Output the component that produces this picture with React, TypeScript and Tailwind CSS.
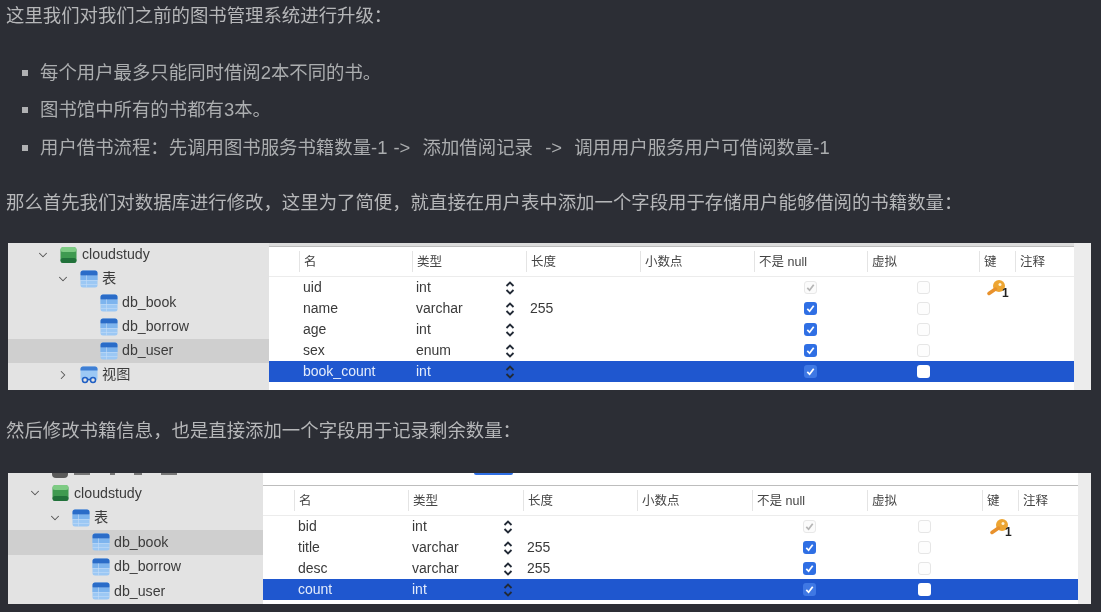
import { ChevronDown, ChevronRight } from "lucide-react";

type SideItem = { label: string; level: 0 | 1 | 2; icon: "db" | "table" | "view"; chevron?: "down" | "right"; active?: boolean };

type Field = { name: string; type: string; length?: string; selected?: boolean; primary?: boolean };

const COLUMNS = ["名", "类型", "长度", "小数点", "不是 null", "虚拟", "键", "注释"];

function DbIcon() {
  return (
    <svg viewBox="0 0 17 18" className="mr-px h-[18px] w-[17px] shrink-0">
      <rect x="0.5" y="1" width="16" height="16" rx="3.5" fill="#3f9a50" />
      <rect x="0.5" y="1" width="16" height="5" rx="2.5" fill="#7ecb84" />
      <rect x="0.5" y="12" width="16" height="5" rx="2.5" fill="#21713a" />
    </svg>
  );
}

function TableIcon() {
  return (
    <svg viewBox="0 0 18 18" className="h-[18px] w-[18px] shrink-0">
      <rect x="0.5" y="0.5" width="17" height="17" rx="2.5" fill="#9cc8f4" />
      <rect x="0.5" y="6" width="17" height="4" fill="#7db4ee" />
      <path d="M0.5 3a2.5 2.5 0 0 1 2.5-2.5h12a2.5 2.5 0 0 1 2.5 2.5v2.5h-17z" fill="#2a6cc8" />
      <rect x="0.5" y="10" width="17" height="0.6" fill="#c4dcf7" />
      <rect x="0.5" y="14" width="17" height="0.6" fill="#c4dcf7" />
      <rect x="6" y="5.5" width="0.6" height="12" fill="#c4dcf7" />
    </svg>
  );
}

function ViewIcon() {
  return (
    <svg viewBox="0 0 18 18" className="h-[18px] w-[18px] shrink-0">
      <rect x="0.5" y="0.5" width="17" height="14" rx="2.5" fill="#9cc8f4" />
      <path d="M0.5 3a2.5 2.5 0 0 1 2.5-2.5h12a2.5 2.5 0 0 1 2.5 2.5v1.5h-17z" fill="#3f7fd4" />
      <circle cx="5" cy="14" r="2.5" fill="#e3e3e3" stroke="#1f5fc4" strokeWidth="1.5" />
      <circle cx="13" cy="14" r="2.5" fill="#e3e3e3" stroke="#1f5fc4" strokeWidth="1.5" />
      <path d="M7.5 13.5h3" stroke="#1f5fc4" strokeWidth="1.5" />
    </svg>
  );
}

function KeyIcon() {
  return (
    <svg viewBox="0 0 18 16" className="h-4 w-[18px]">
      <circle cx="12" cy="6" r="6" fill="#eda532" />
      <circle cx="13" cy="4.5" r="1.5" fill="#fff4d8" />
      <path d="M8.5 9 2 13.5" stroke="#e8912c" strokeWidth="3.5" strokeLinecap="round" />
    </svg>
  );
}

function UpDown() {
  return (
    <svg viewBox="0 0 10 14" className="h-[14px] w-[10px] shrink-0" fill="none" stroke="#222a36" strokeWidth="1.8">
      <path d="M1.5 5 5 1.5 8.5 5" />
      <path d="M1.5 9 5 12.5 8.5 9" />
    </svg>
  );
}

function Checkbox({ checked, muted, selected }: { checked?: boolean; muted?: boolean; selected?: boolean }) {
  if (!checked) {
    return <span className={selected ? "h-[13px] w-[13px] rounded-[3px] bg-white" : "h-[13px] w-[13px] rounded-[3px] border border-[#e6e6e6] bg-[#fdfdfd]"} />;
  }
  const box = muted ? "border border-[#e8e8e8] bg-[#fbfbfb]" : selected ? "bg-[#3f78e4]" : "bg-[#2f6fe4]";
  return (
    <span className={`flex h-[13px] w-[13px] items-center justify-center rounded-[3px] ${box}`}>
      <svg viewBox="0 0 12 12" className="h-[11px] w-[11px]" fill="none" stroke={muted ? "#b5b5b5" : "#ffffff"} strokeWidth="1.9">
        <path d="M2.5 6.5 5 9l4.5-6" />
      </svg>
    </span>
  );
}

function Sidebar({ items, width, pads, rowHeight, children }: { items: SideItem[]; width: string; pads: string[]; rowHeight: string; children?: React.ReactNode }) {
  return (
    <div className={`h-full shrink-0 bg-[#e3e3e3] text-[14.2px] text-[#3c3c3c] ${width}`}>
      {children}
      {items.map((item) => (
        <div key={item.label} className={`flex items-center ${rowHeight} ${pads[item.level]} ${item.active ? "bg-[#cfcfcf]" : ""}`}>
          <span className="w-[14px] shrink-0 text-[#555]">
            {item.chevron === "down" && <ChevronDown size={14} strokeWidth={1.8} />}
            {item.chevron === "right" && <ChevronRight size={14} strokeWidth={1.8} />}
          </span>
          <span className="ml-[10px] mr-[4px] flex">
            {item.icon === "db" && <DbIcon />}
            {item.icon === "table" && <TableIcon />}
            {item.icon === "view" && <ViewIcon />}
          </span>
          <span>{item.label}</span>
        </div>
      ))}
    </div>
  );
}

function DesignTable({ fields, grid, typeWidth }: { fields: Field[]; grid: string; typeWidth: string }) {
  return (
    <div className="min-w-0 text-[14px] text-[#3a3a3a]">
      <div className={`grid h-[30px] items-center border-b border-[#ececec] ${grid}`}>
        <span />
        {COLUMNS.map((col) => (
          <span key={col} className="border-l border-[#e4e4e4] pl-[4px] pt-[2px] text-[12.5px] text-[#444]">
            {col}
          </span>
        ))}
      </div>
      {fields.map((f) => (
        <div key={f.name} className={`grid h-[21px] items-center ${grid} ${f.selected ? "bg-[#1f57cf] text-[#e4ecfb]" : ""}`}>
          <span />
          <span className="pl-[4px]">{f.name}</span>
          <span className="flex items-center pl-[4px]">
            <span className={typeWidth}>{f.type}</span>
            <UpDown />
          </span>
          <span className="pl-[4px]">{f.length}</span>
          <span />
          <span className="flex justify-center">
            <Checkbox checked muted={f.primary} selected={f.selected} />
          </span>
          <span className="flex justify-center">
            <Checkbox selected={f.selected} />
          </span>
          <span className="pl-[8px]">
            {f.primary && (
              <span className="relative block h-4 w-[18px]">
                <KeyIcon />
                <span className="absolute left-[15px] top-[7px] text-[12px] font-bold leading-none text-[#222]">1</span>
              </span>
            )}
          </span>
          <span />
        </div>
      ))}
    </div>
  );
}

const userSide: SideItem[] = [
  { label: "cloudstudy", level: 0, icon: "db", chevron: "down" },
  { label: "表", level: 1, icon: "table", chevron: "down" },
  { label: "db_book", level: 2, icon: "table" },
  { label: "db_borrow", level: 2, icon: "table" },
  { label: "db_user", level: 2, icon: "table", active: true },
  { label: "视图", level: 1, icon: "view", chevron: "right" },
];

const bookSide: SideItem[] = [
  { label: "cloudstudy", level: 0, icon: "db", chevron: "down" },
  { label: "表", level: 1, icon: "table", chevron: "down" },
  { label: "db_book", level: 2, icon: "table", active: true },
  { label: "db_borrow", level: 2, icon: "table" },
  { label: "db_user", level: 2, icon: "table" },
];

const userFields: Field[] = [
  { name: "uid", type: "int", primary: true },
  { name: "name", type: "varchar", length: "255" },
  { name: "age", type: "int" },
  { name: "sex", type: "enum" },
  { name: "book_count", type: "int", selected: true },
];

const bookFields: Field[] = [
  { name: "bid", type: "int", primary: true },
  { name: "title", type: "varchar", length: "255" },
  { name: "desc", type: "varchar", length: "255" },
  { name: "count", type: "int", selected: true },
];

const BULLETS = [
  "每个用户最多只能同时借阅2本不同的书。",
  "图书馆中所有的书都有3本。",
  "用户借书流程：先调用图书服务书籍数量-1 ->  添加借阅记录  ->  调用用户服务用户可借阅数量-1",
];

export default function App() {
  return (
    <main className="h-[612px] w-[1101px] overflow-hidden bg-[#2c2e35] pt-px font-['Liberation_Sans','Noto_Sans_CJK_SC',sans-serif] text-[18.4px] text-[#b6b7b9] blur-[0.35px] [text-spacing-trim:space-all]">
      <p className="h-[30px] pl-[6px] leading-[30px]">这里我们对我们之前的图书管理系统进行升级：</p>

      <ul className="mt-[23px]">
        {BULLETS.map((b) => (
          <li key={b} className="flex h-[37.5px] items-center whitespace-pre pl-[22px] text-[#abadaf] [word-spacing:1px]">
            <span className="mr-[12px] h-[6px] w-[6px] bg-[#b0b1b3]" />
            {b}
          </li>
        ))}
      </ul>

      <p className="mt-[21.5px] h-[30px] pl-[6px] leading-[30px]">
        那么首先我们对数据库进行修改，这里为了简便，就直接在用户表中添加一个字段用于存储用户能够借阅的书籍数量：
      </p>

      {/* first screenshot */}
      <section className="ml-[8px] mr-[10px] mt-[25px] flex h-[147px] overflow-hidden bg-white">
        <Sidebar items={userSide} width="w-[261px]" pads={["pl-[28px]", "pl-[48px]", "pl-[68px]"]} rowHeight="h-[24px]" />
        <div className="flex min-w-0 flex-1">
          <div className="w-[805px] border-t-[3px] border-[#dcdcdc]">
            <div className="border-t border-[#bdbdbd]">
              <DesignTable fields={userFields} grid="grid-cols-[30px_113px_114px_114px_114px_113px_112px_36px_59px]" typeWidth="w-[89px]" />
            </div>
          </div>
          <div className="flex-1 bg-[#ececec]" />
        </div>
      </section>

      <p className="mt-[26px] h-[30px] pl-[6px] leading-[30px]">然后修改书籍信息，也是直接添加一个字段用于记录剩余数量：</p>

      {/* second screenshot */}
      <section className="ml-[8px] mr-[10px] mt-[27px] flex h-[131px] overflow-hidden bg-white">
        <Sidebar items={bookSide} width="w-[255px]" pads={["pl-[20px]", "pl-[40px]", "pl-[60px]"]} rowHeight="h-[24.5px]">
          {/* clipped row above cloudstudy */}
          <div className="flex h-[8px] items-start overflow-hidden pl-[44px]">
            <span className="h-[5px] w-[16px] rounded-b-[4px] bg-[#5a5a5a]" />
            <span className="ml-[6px] h-[2px] w-[16px] bg-[#777]" />
            <span className="ml-[20px] h-[2px] w-[5px] bg-[#777]" />
            <span className="ml-[19px] h-[2px] w-[8px] bg-[#777]" />
            <span className="ml-[19px] h-[2px] w-[16px] bg-[#777]" />
          </div>
        </Sidebar>
        <div className="flex min-w-0 flex-1">
          <div className="relative w-[815px] pt-[12px]">
            <span className="absolute left-[211px] top-0 h-[2px] w-[39px] rounded-b-[2px] bg-[#2f6fe4]" />
            <div className="border-t border-[#bdbdbd]">
              <DesignTable fields={bookFields} grid="grid-cols-[31px_114px_115px_114px_115px_115px_115px_36px_60px]" typeWidth="w-[91px]" />
            </div>
          </div>
          <div className="flex-1 bg-[#ececec]" />
        </div>
      </section>
    </main>
  );
}
